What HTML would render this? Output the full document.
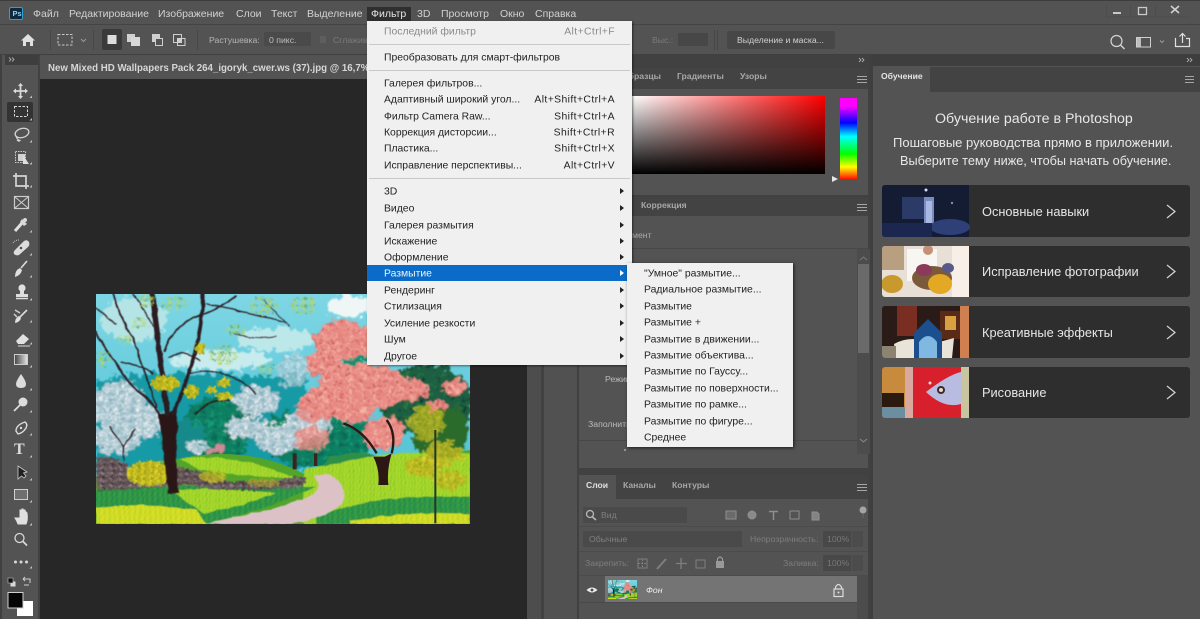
<!DOCTYPE html>
<html lang="ru"><head><meta charset="utf-8"><title>Photoshop</title>
<style>
html,body{margin:0;padding:0;background:#535353}
#r{position:relative;width:1200px;height:619px;overflow:hidden;background:#535353;font-family:"Liberation Sans","DejaVu Sans",sans-serif;color:#d8d8d8;font-size:10.5px;filter:blur(.35px)}
.b{position:absolute}
.t{position:absolute;white-space:nowrap;line-height:14px;height:14px}
.m{font-size:10.5px;color:#d2d2d2}
.k{color:#222;font-size:10.4px;transform:translateY(1.5px)}
.s{right:585px;color:#222;font-size:10.4px;letter-spacing:.4px;transform:translateY(1.5px)}
.o{font-size:8.6px;color:#bdbdbd;font-weight:bold}
.sep{position:absolute;left:369px;width:261px;height:1px;background:#c9c9c9}
.card{position:absolute;left:882px;width:308px;background:#2e2e2e;border-radius:3px;overflow:hidden}
.ct{position:absolute;left:982px;color:#e6e6e6;font-size:12.8px;white-space:nowrap;line-height:16px}
svg{position:absolute;overflow:visible}
</style></head><body>
<div id="r">
<!-- main regions -->
<div class="b" style="left:0;top:0;width:1200px;height:1px;background:#3c3c3c"></div>
<div class="b" style="left:0;top:24px;width:1200px;height:1px;background:#444"></div>
<div class="b" style="left:0;top:54px;width:1200px;height:1px;background:#404040"></div>
<div class="b" style="left:0;top:55px;width:1200px;height:11px;background:#3e3e3e"></div>
<div class="b" style="left:0;top:55px;width:2px;height:564px;background:#404040"></div>
<div class="b" style="left:2px;top:55px;width:36px;height:564px;background:#535353"></div>
<div class="b" style="left:5px;top:55px;width:33px;height:10px;background:#3e3e3e"></div>
<div class="b" style="left:38px;top:55px;width:2px;height:564px;background:#424242"></div>
<div class="b" style="left:40px;top:55px;width:487px;height:24px;background:#424242"></div>
<div class="b" style="left:40px;top:55px;width:330px;height:24px;background:#535353"></div>
<div class="b" style="left:40px;top:79px;width:487px;height:540px;background:#272727"></div>
<div class="b" style="left:527px;top:55px;width:14px;height:564px;background:#4d4d4d"></div>
<div class="b" style="left:541px;top:55px;width:3px;height:564px;background:#414141"></div>
<div class="b" style="left:544px;top:66px;width:33px;height:553px;background:#515151"></div>
<div class="b" style="left:577px;top:55px;width:295px;height:564px;background:#414141"></div>
<!-- color panel -->
<div class="b" style="left:579px;top:68px;width:289px;height:21px;background:#434343"></div>
<div class="b" style="left:579px;top:89px;width:289px;height:106px;background:#535353"></div>
<div class="b" style="left:632px;top:96px;width:193px;height:78px;background:linear-gradient(to top,#000,rgba(0,0,0,0)),linear-gradient(to right,#fff,#f00)"></div>
<div class="b" style="left:840px;top:98px;width:17px;height:82px;background:linear-gradient(to bottom,#f0f 0%,#f0f 10%,#00f 30%,#0ff 47%,#0f0 68%,#ff0 84%,#f00 100%)"></div>
<!-- adjustment panel -->
<div class="b" style="left:579px;top:197px;width:289px;height:19px;background:#434343"></div>
<div class="b" style="left:579px;top:216px;width:289px;height:252px;background:#535353"></div>
<div class="b" style="left:579px;top:248px;width:289px;height:1px;background:#484848"></div>
<div class="b" style="left:579px;top:440px;width:279px;height:1px;background:#484848"></div>
<div class="b" style="left:857px;top:249px;width:13px;height:205px;background:#4c4c4c"></div>
<div class="b" style="left:858px;top:264px;width:11px;height:89px;background:#6a6a6a"></div>
<!-- layers panel -->
<div class="b" style="left:579px;top:475px;width:289px;height:24px;background:#434343"></div>
<div class="b" style="left:579px;top:475px;width:37px;height:24px;background:#535353"></div>
<div class="b" style="left:579px;top:499px;width:289px;height:120px;background:#535353"></div>
<div class="b" style="left:583px;top:507px;width:104px;height:16px;background:#4a4a4a"></div>
<div class="b" style="left:583px;top:531px;width:159px;height:16px;background:#4a4a4a"></div>
<div class="b" style="left:823px;top:531px;width:28px;height:16px;background:#484848"></div>
<div class="b" style="left:852px;top:531px;width:11px;height:16px;background:#4c4c4c"></div>
<div class="b" style="left:823px;top:555px;width:28px;height:16px;background:#484848"></div>
<div class="b" style="left:852px;top:555px;width:11px;height:16px;background:#4c4c4c"></div>
<div class="b" style="left:579px;top:526px;width:289px;height:1px;background:#4b4b4b"></div>
<div class="b" style="left:579px;top:551px;width:289px;height:1px;background:#4b4b4b"></div>
<div class="b" style="left:579px;top:575px;width:289px;height:1px;background:#4b4b4b"></div>
<div class="b" style="left:605px;top:576px;width:252px;height:26px;background:#747474"></div>
<div class="b" style="left:857px;top:576px;width:11px;height:43px;background:#4c4c4c"></div>
<div class="b" style="left:579px;top:602px;width:278px;height:1px;background:#4a4a4a"></div>
<!-- learn panel -->
<div class="b" style="left:872px;top:55px;width:328px;height:564px;background:#535353"></div>
<div class="b" style="left:872px;top:55px;width:328px;height:11px;background:#3e3e3e"></div>
<div class="b" style="left:872px;top:67px;width:328px;height:25px;background:#434343"></div>
<div class="b" style="left:873px;top:67px;width:57px;height:25px;background:#535353"></div>
<div class="b" style="left:870px;top:55px;width:3px;height:564px;background:#3f3f3f"></div>
<!-- options controls -->
<div class="b" style="left:102px;top:29px;width:20px;height:21px;background:#3a3a3a;border-radius:2px"></div>
<div class="b" style="left:264px;top:32px;width:47px;height:14px;background:#4a4a4a"></div>
<div class="b" style="left:678px;top:33px;width:30px;height:13px;background:#474747"></div>
<div class="b" style="left:727px;top:31px;width:108px;height:18px;background:#474747;border-radius:2px"></div>
<div class="b" style="left:367px;top:7px;width:44px;height:14px;background:#2f2f2f"></div>
<div class="b" style="left:7px;top:102px;width:26px;height:20px;background:#333;border-radius:2px"></div>

<!-- painting -->
<svg style="left:96px;top:294px" width="374" height="230" viewBox="18 12 1122 690" preserveAspectRatio="none">
<defs>
<filter id="pa" x="-8%" y="-8%" width="116%" height="116%"><feTurbulence type="fractalNoise" baseFrequency="0.05" numOctaves="4" seed="7"/><feDisplacementMap in="SourceGraphic" scale="46" xChannelSelector="R" yChannelSelector="G"/><feGaussianBlur stdDeviation="2.400"/></filter>
<filter id="pb" x="-8%" y="-8%" width="116%" height="116%"><feTurbulence type="fractalNoise" baseFrequency="0.11" numOctaves="3" seed="3"/><feDisplacementMap in="SourceGraphic" scale="24" xChannelSelector="G" yChannelSelector="R"/><feGaussianBlur stdDeviation="1.600"/></filter>
<filter id="pc" x="-5%" y="-5%" width="110%" height="110%"><feTurbulence type="fractalNoise" baseFrequency="0.03" numOctaves="2" seed="11"/><feDisplacementMap in="SourceGraphic" scale="10" xChannelSelector="R" yChannelSelector="G"/><feGaussianBlur stdDeviation="1.500"/></filter>
<linearGradient id="sky" x1="0" y1="0" x2="0" y2="1"><stop offset="0" stop-color="#7ed6e4"/><stop offset="1" stop-color="#45bed2"/></linearGradient>
<pattern id="pk" width="64" height="52" patternUnits="userSpaceOnUse" patternTransform="scale(.6)"><rect width="64" height="52" fill="#e88a84"/><ellipse cx="12" cy="10" rx="11" ry="6" fill="#f4ac9f"/><ellipse cx="42" cy="14" rx="9" ry="5" fill="#d4645f"/><ellipse cx="28" cy="30" rx="12" ry="6" fill="#f6b9ab"/><ellipse cx="54" cy="36" rx="9" ry="7" fill="#f0a094"/><ellipse cx="8" cy="42" rx="7" ry="5" fill="#b8484e"/><ellipse cx="38" cy="47" rx="7" ry="3" fill="#cf5f60"/></pattern>
<pattern id="wh" width="54" height="44" patternUnits="userSpaceOnUse" patternTransform="scale(.6)"><rect width="54" height="44" fill="#a9c6d0"/><ellipse cx="10" cy="9" rx="10" ry="5" fill="#eef3f7"/><ellipse cx="36" cy="12" rx="9" ry="6" fill="#dae5ec"/><ellipse cx="22" cy="28" rx="11" ry="5" fill="#f2f5f8"/><ellipse cx="46" cy="32" rx="6" ry="5" fill="#6ea4af"/><ellipse cx="6" cy="36" rx="6" ry="4" fill="#7aa8b4"/></pattern>
<pattern id="ye" width="36" height="30" patternUnits="userSpaceOnUse" patternTransform="scale(.6)"><rect width="36" height="30" fill="#b9b31e"/><ellipse cx="9" cy="8" rx="7" ry="5" fill="#e8d52a"/><ellipse cx="26" cy="12" rx="6" ry="5" fill="#7f911c"/><ellipse cx="16" cy="24" rx="8" ry="4" fill="#eedd36"/></pattern>
<pattern id="lf" width="42" height="34" patternUnits="userSpaceOnUse" patternTransform="scale(.6)"><ellipse cx="10" cy="9" rx="9" ry="6" fill="#a9cc4a"/><ellipse cx="30" cy="11" rx="7" ry="5" fill="#63a86a"/><ellipse cx="20" cy="26" rx="9" ry="5" fill="#c1d652"/></pattern>
<pattern id="gs" width="44" height="26" patternUnits="userSpaceOnUse" patternTransform="scale(.7)"><rect width="44" height="26" fill="#9bd42a"/><path d="M4 26L10 4M18 26L24 8M34 26L38 2" stroke="#bbdc2e" stroke-width="4"/><path d="M12 26L16 10M28 26L31 12" stroke="#7cc02a" stroke-width="3"/></pattern>
<pattern id="gd" width="44" height="26" patternUnits="userSpaceOnUse" patternTransform="scale(.7)"><rect width="44" height="26" fill="#2d9646"/><path d="M4 26L10 4M24 26L28 6" stroke="#1f8650" stroke-width="4"/><path d="M14 26L18 8M36 26L40 6" stroke="#4fa636" stroke-width="3"/></pattern>
<pattern id="gy" width="44" height="26" patternUnits="userSpaceOnUse" patternTransform="scale(.7)"><rect width="44" height="26" fill="#cfdc24"/><path d="M4 26L10 4M24 26L28 6" stroke="#e4e230" stroke-width="4"/><path d="M14 26L18 8M36 26L40 6" stroke="#aed026" stroke-width="3"/></pattern>
<pattern id="st" width="40" height="26" patternUnits="userSpaceOnUse" patternTransform="scale(.7)"><rect width="40" height="26" fill="#5e4f52"/><ellipse cx="10" cy="7" rx="9" ry="5" fill="#8f7f87"/><ellipse cx="30" cy="12" rx="8" ry="5" fill="#7a6a66"/><ellipse cx="16" cy="21" rx="8" ry="4" fill="#3c3135"/></pattern>
<pattern id="dg" width="50" height="40" patternUnits="userSpaceOnUse" patternTransform="scale(.7)"><rect width="50" height="40" fill="#0f7f62"/><ellipse cx="12" cy="10" rx="11" ry="7" fill="#139a74"/><ellipse cx="36" cy="26" rx="11" ry="7" fill="#0a6654"/></pattern>
<pattern id="pd" width="56" height="44" patternUnits="userSpaceOnUse" patternTransform="scale(.7)"><rect width="56" height="44" fill="#1b5f42"/><ellipse cx="12" cy="11" rx="10" ry="6" fill="#2f7a3c"/><ellipse cx="38" cy="26" rx="11" ry="7" fill="#0f3f2e"/></pattern>
<symbol id="art" viewBox="18 12 1122 690" preserveAspectRatio="none">
<rect x="18" y="12" width="1122" height="690" fill="url(#sky)"/>
<g filter="url(#pa)">
<ellipse cx="780" cy="50" rx="75" ry="32" fill="#eef6f6"/>
<ellipse cx="130" cy="90" rx="100" ry="65" fill="#b4e4e6"/>
<ellipse cx="560" cy="150" rx="120" ry="35" fill="#bde8ea"/>
<ellipse cx="390" cy="210" rx="150" ry="30" fill="#c8ecee"/>
<path d="M18 275Q160 240 330 252T650 255V540H18Z" fill="#169aa6"/>
<ellipse cx="380" cy="420" rx="105" ry="100" fill="url(#dg)"/>
<ellipse cx="280" cy="450" rx="70" ry="60" fill="#138a8a"/>
<ellipse cx="680" cy="440" rx="170" ry="90" fill="url(#dg)"/>
<ellipse cx="90" cy="350" rx="85" ry="75" fill="url(#wh)"/>
<ellipse cx="80" cy="445" rx="75" ry="45" fill="url(#wh)"/>
<ellipse cx="170" cy="395" rx="45" ry="50" fill="url(#wh)"/>
<ellipse cx="500" cy="335" rx="70" ry="45" fill="url(#wh)"/>
<ellipse cx="470" cy="415" rx="65" ry="32" fill="url(#wh)"/>
<ellipse cx="565" cy="445" rx="70" ry="45" fill="url(#wh)"/>
<ellipse cx="610" cy="240" rx="50" ry="50" fill="url(#wh)" opacity=".7"/>
<ellipse cx="655" cy="400" rx="70" ry="50" fill="url(#wh)"/>
<ellipse cx="320" cy="470" rx="35" ry="18" fill="url(#wh)"/>
<ellipse cx="380" cy="480" rx="25" ry="14" fill="#cf8a96"/>
<ellipse cx="665" cy="445" rx="50" ry="38" fill="url(#pk)" opacity=".85"/>
<ellipse cx="660" cy="370" rx="40" ry="30" fill="url(#pk)" opacity=".8"/>
</g>
<path d="M18 560L300 500Q480 470 640 550L1140 480V702H18Z" fill="#52a52a"/>
<g filter="url(#pc)">
<path d="M270 505Q430 485 620 565Q450 560 330 540Z" fill="url(#gs)"/>
<path d="M640 540Q900 470 1140 490V702H640Z" fill="url(#gs)"/>
<path d="M18 600Q250 575 680 590Q520 660 350 702H18Z" fill="url(#gd)"/>
<path d="M18 655Q120 635 320 660L350 702H18Z" fill="url(#gy)"/>
<path d="M240 600Q400 590 560 610Q450 650 340 670Z" fill="url(#gs)"/>
<path d="M680 680Q840 610 1140 620V702H680Z" fill="url(#gd)"/>
<path d="M780 692Q950 662 1140 672V702H780Z" fill="url(#gy)"/>
<path d="M720 500Q800 480 860 495L700 530Z" fill="#2f8f4a"/>
</g>
<g filter="url(#pb)">
<path d="M18 500Q80 495 120 530Q300 520 420 575Q550 570 650 560L640 590Q450 610 280 585Q130 600 18 600Z" fill="url(#st)"/>
<ellipse cx="180" cy="550" rx="70" ry="38" fill="url(#ye)"/>
<ellipse cx="370" cy="560" rx="40" ry="18" fill="url(#ye)" opacity=".75"/>
<ellipse cx="520" cy="578" rx="50" ry="12" fill="url(#ye)" opacity=".55"/>
</g>
<path d="M340 702Q500 672 630 630Q715 600 672 558L722 554Q785 600 752 645Q690 692 600 702Z" fill="#dcc2c6" filter="url(#pc)"/>
<g fill="#3a2420"><rect x="608" y="490" width="12" height="48"/><rect x="672" y="490" width="10" height="38"/></g>
<!-- pink tree -->
<g filter="url(#pa)">
<ellipse cx="1010" cy="330" rx="140" ry="105" fill="url(#pd)"/>
<ellipse cx="790" cy="195" rx="42" ry="30" fill="#128f6e"/>
<ellipse cx="1050" cy="425" rx="85" ry="85" fill="#2b6b2c"/>
<ellipse cx="760" cy="150" rx="90" ry="58" fill="url(#pk)"/>
<ellipse cx="700" cy="220" rx="55" ry="42" fill="url(#pk)"/>
<ellipse cx="815" cy="290" rx="135" ry="72" fill="url(#pk)"/>
<ellipse cx="700" cy="340" rx="72" ry="48" fill="url(#pk)"/>
<ellipse cx="965" cy="300" rx="50" ry="32" fill="url(#pk)"/>
<ellipse cx="1095" cy="290" rx="36" ry="24" fill="url(#pk)"/>
<ellipse cx="880" cy="430" rx="62" ry="50" fill="url(#pk)"/>
<ellipse cx="1040" cy="345" rx="32" ry="16" fill="url(#pk)"/>
<ellipse cx="780" cy="370" rx="60" ry="30" fill="url(#pk)"/>
</g>
<path d="M850 500Q870 540 865 585H895Q890 540 905 490L885 500Z" fill="#2d1715"/>
<path d="M760 400Q820 420 860 490M905 490Q920 430 890 390" stroke="#2d1715" stroke-width="7" fill="none"/>
<!-- small yellow tree -->
<g filter="url(#pa)">
<ellipse cx="1010" cy="400" rx="55" ry="50" fill="url(#ye)" opacity=".75"/>
<ellipse cx="1060" cy="490" rx="62" ry="36" fill="url(#ye)" opacity=".85"/>
<ellipse cx="1000" cy="530" rx="58" ry="30" fill="url(#ye)" opacity=".9"/>
<ellipse cx="1080" cy="570" rx="45" ry="28" fill="url(#ye)" opacity=".85"/>
</g>
<path d="M1036 420V700" stroke="#27352a" stroke-width="6" fill="none"/>
<!-- main tree -->
<g filter="url(#pc)">
<path d="M205 372Q222 500 236 610H266Q254 490 262 420L262 352L233 372Z" fill="#2a1614"/>
<g stroke="#2a1c20" fill="none" stroke-linecap="round">
<path d="M188 12Q205 170 233 372" stroke-width="16"/>
<path d="M338 12Q340 100 308 212Q280 300 250 372" stroke-width="11"/>
<path d="M68 12Q95 90 128 142Q170 260 198 352" stroke-width="5"/>
<path d="M18 127Q70 220 130 290Q180 330 208 372" stroke-width="6"/>
<path d="M18 52Q60 90 78 102" stroke-width="4"/>
<path d="M223 182Q255 95 343 72Q400 50 438 17" stroke-width="5"/>
<path d="M238 202Q278 175 328 212" stroke-width="4"/>
<path d="M298 252Q368 225 468 282Q490 300 498 312" stroke-width="4"/>
<path d="M318 372Q358 322 418 332" stroke-width="5"/>
<path d="M348 42Q498 72 588 97" stroke-width="4"/>
<path d="M93 217Q158 222 188 252" stroke-width="4"/>
<path d="M130 12Q170 70 190 110" stroke-width="4"/>
<path d="M430 130Q500 150 560 140" stroke-width="2.500"/>
<path d="M100 510V470L60 410M100 470L135 420" stroke-width="4"/>
<path d="M520 30L600 110" stroke-width="2.500"/>
</g>
</g>
<g filter="url(#pb)">
<ellipse cx="172" cy="32" rx="24" ry="20" fill="url(#lf)"/>
<ellipse cx="255" cy="40" rx="40" ry="20" fill="url(#lf)"/>
<ellipse cx="520" cy="50" rx="45" ry="28" fill="url(#lf)"/>
<ellipse cx="640" cy="45" rx="40" ry="28" fill="url(#lf)"/>
<ellipse cx="400" cy="195" rx="42" ry="30" fill="url(#lf)"/>
<ellipse cx="35" cy="205" rx="24" ry="26" fill="url(#lf)"/>
<ellipse cx="105" cy="148" rx="22" ry="16" fill="url(#lf)"/>
<ellipse cx="150" cy="100" rx="22" ry="16" fill="url(#lf)"/>
<ellipse cx="440" cy="120" rx="30" ry="16" fill="url(#lf)"/>
<ellipse cx="330" cy="175" rx="16" ry="18" fill="url(#ye)"/>
<ellipse cx="225" cy="280" rx="44" ry="24" fill="url(#ye)"/>
<ellipse cx="305" cy="305" rx="22" ry="20" fill="url(#ye)"/>
<ellipse cx="405" cy="318" rx="28" ry="12" fill="url(#ye)"/>
<ellipse cx="400" cy="278" rx="22" ry="13" fill="url(#ye)"/>
<ellipse cx="365" cy="300" rx="14" ry="12" fill="url(#ye)"/>
<ellipse cx="530" cy="240" rx="32" ry="14" fill="url(#lf)"/>
</g>
</symbol>
</defs>
<use href="#art" x="18" y="12" width="1122" height="690"/>
</svg>

<!-- icons & shapes -->
<svg style="left:0;top:0" width="1200" height="619" viewBox="0 0 1200 619" fill="none">
<!-- PS logo -->
<rect x="9.500" y="7.500" width="13" height="12" rx="1.500" fill="#0d2a3e" stroke="#2f9fd0"/>
<!-- home -->
<path d="M21 40.500L28 34L35 40.500H33V46H30V42H26V46H23V40.500Z" fill="#e0e0e0"/>
<!-- marquee option -->
<rect x="58" y="34.500" width="14" height="10.500" stroke="#c8c8c8" stroke-dasharray="2.500 1.500"/>
<path d="M81 39L83.500 41.500L86 39" stroke="#9a9a9a"/>
<!-- selection mode buttons -->
<rect x="107.500" y="35" width="9" height="9" fill="#dcdcdc"/>
<rect x="127" y="34" width="8" height="8" fill="#d0d0d0"/><rect x="131" y="37" width="9" height="9" fill="#d8d8d8"/>
<rect x="152" y="34" width="8" height="8" fill="#cfcfcf"/><rect x="155.500" y="38.500" width="7" height="7" stroke="#d0d0d0" fill="#535353"/>
<rect x="173.500" y="34.500" width="8" height="8" stroke="#cfcfcf"/><rect x="177.500" y="38.500" width="7.500" height="7" stroke="#cfcfcf"/><rect x="177.500" y="38.500" width="4" height="4" fill="#cfcfcf"/>
<!-- separators -->
<path d="M50.500 30V50M93.500 30V50M197.500 30V50M714.500 30V50M717.500 30V50" stroke="#474747"/>
<!-- anti-alias checkbox -->
<rect x="320" y="36" width="6" height="7" fill="#5e5e5e"/>
<!-- window buttons -->
<path d="M1113 13H1121" stroke="#c9c9c9" stroke-width="2"/>
<rect x="1138.500" y="7.500" width="8" height="7" stroke="#c9c9c9" stroke-width="1.300"/>
<path d="M1171 6L1179 13M1179 6L1171 13" stroke="#d0d0d0" stroke-width="1.600"/>
<path d="M1106.500 5V17H1190M1130.500 5V17M1155.500 5V17" stroke="#4d4d4d"/>
<!-- top-right icons -->
<circle cx="1116.500" cy="41" r="5.500" stroke="#d5d5d5" stroke-width="1.200"/><path d="M1120.500 45L1124.500 49" stroke="#d5d5d5" stroke-width="1.400"/>
<rect x="1136.500" y="37.500" width="14" height="9.500" stroke="#cfcfcf"/><rect x="1137" y="38" width="4" height="8.500" fill="#bdbdbd"/>
<path d="M1160 40.500L1162 42.500L1164 40.500" stroke="#9a9a9a"/>
<path d="M1176 38.500H1175.500V46.500H1189.500V38.500H1186" stroke="#e0e0e0" stroke-width="1.200"/><path d="M1182.500 43V34M1179.500 36.500L1182.500 33.500L1185.500 36.500" stroke="#e0e0e0" stroke-width="1.200"/>
<!-- collapse chevrons -->
<g stroke="#bfbfbf" stroke-width=".8">
<path d="M9 57.500L11 59.500L9 61.500M12 57.500L14 59.500L12 61.500"/>
<path d="M859 58L861 60L859 62M862 58L864 60L862 62"/>
<path d="M1187 58L1189 60L1187 62M1190 58L1192 60L1190 62"/>
</g>
<!-- panel menu icons -->
<g stroke="#a6a6a6">
<path d="M857 76.500H867M857 79.500H867M857 82.500H867"/>
<path d="M857 204.500H867M857 207.500H867M857 210.500H867"/>
<path d="M857 484.500H867M857 487.500H867M857 490.500H867"/>
<path d="M1185 76.500H1194M1185 79.500H1194M1185 82.500H1194"/>
</g>
<path d="M832 176V182L838 179Z" fill="#e8e8e8"/>
<path d="M860 260L863.500 257L867 260" stroke="#7a7a7a"/><path d="M860 439L863.500 442L867 439" stroke="#8a8a8a"/>
<!-- tool corner triangles -->
<g fill="#c0c0c0">
<path d="M32 95.500V98H29.500Z"/><path d="M32 118V120.500H29.500Z"/><path d="M32 140V142.500H29.500Z"/><path d="M32 162V164.500H29.500Z"/><path d="M32 185V187.500H29.500Z"/><path d="M32 230V232.500H29.500Z"/><path d="M32 253V255.500H29.500Z"/><path d="M32 275V277.500H29.500Z"/><path d="M32 298V300.500H29.500Z"/><path d="M32 320V322.500H29.500Z"/><path d="M32 342V344.500H29.500Z"/><path d="M32 365V367.500H29.500Z"/><path d="M32 388V390.500H29.500Z"/><path d="M32 410V412.500H29.500Z"/><path d="M32 433V435.500H29.500Z"/><path d="M32 455V457.500H29.500Z"/><path d="M32 478V480.500H29.500Z"/><path d="M32 500V502.500H29.500Z"/><path d="M32 523V525.500H29.500Z"/><path d="M32 566V568.500H29.500Z"/>
</g>
<!-- move -->
<path d="M20.500 85V97M14.500 91H26.500" stroke="#d8d8d8" stroke-width="1.800"/>
<path d="M20.500 83L18 86H23ZM20.500 99L18 96H23ZM13 91L16 88.500V93.500ZM28 91L25 88.500V93.500Z" fill="#dcdcdc"/>
<!-- marquee -->
<rect x="14.500" y="106.500" width="13" height="10" stroke="#d8d8d8" stroke-dasharray="2.500 1.500"/>
<!-- lasso -->
<ellipse cx="22" cy="133" rx="7" ry="4.500" transform="rotate(-15 22 133)" stroke="#d2d2d2" stroke-width="1.300"/><path d="M16 136Q17 140 20 140.500Q19 142 17 140" stroke="#d2d2d2" stroke-width="1.200"/>
<!-- object select -->
<rect x="15.500" y="151.500" width="10" height="11" stroke="#ccc" stroke-dasharray="1.500 1"/><rect x="18" y="154" width="7" height="7" fill="#d0d0d0"/><path d="M23 155L29 164H23Z" fill="#dedede"/>
<!-- crop -->
<path d="M16 173V186H29M13 176H26V189" stroke="#d4d4d4" stroke-width="1.700"/>
<!-- frame -->
<rect x="14.500" y="196.500" width="14" height="12" stroke="#ccc" stroke-width="1.200"/><path d="M15 197L28 208M28 197L15 208" stroke="#ccc"/>
<!-- eyedropper -->
<path d="M15 231L22 223" stroke="#e0e0e0" stroke-width="3"/><path d="M22 219L27 224L24 226L20 222Z" fill="#d8d8d8"/><circle cx="25" cy="220" r="2" fill="#d8d8d8"/>
<!-- healing -->
<path d="M15 250L24 241Q27 239 29 242Q30 245 28 247L19 255Q16 256 14 254Q13 252 15 250Z" fill="#dcdcdc"/><circle cx="21" cy="248" r="1.300" fill="#535353"/><path d="M13 243Q15 240 19 240" stroke="#c0c0c0" stroke-dasharray="1 1"/>
<!-- brush -->
<path d="M21 268L27 261" stroke="#dcdcdc" stroke-width="1.600"/><path d="M15 277Q15 270 20 268L22 270Q21 275 15 277Z" fill="#e0e0e0"/>
<!-- stamp -->
<circle cx="22" cy="288" r="3.600" fill="#e0e0e0"/><path d="M20 291H24V294H28V297H16V294H20Z" fill="#dedede"/><path d="M16 298.500H28" stroke="#dedede" stroke-width="1.500"/>
<!-- history brush -->
<path d="M20 317L27 310" stroke="#dcdcdc" stroke-width="1.600"/><path d="M15 323Q15 318 19 316L21 318Q20 322 15 323Z" fill="#e0e0e0"/><path d="M14 314L17 317M15 310L20 313" stroke="#cfcfcf" stroke-width="1.500"/>
<!-- eraser -->
<path d="M16 341L23 334L29 339L24 344H18Z" fill="#e0e0e0"/><path d="M18 346H30" stroke="#dadada"/>
<!-- gradient -->
<defs><linearGradient id="g1"><stop offset="0" stop-color="#444"/><stop offset="1" stop-color="#e6e6e6"/></linearGradient></defs>
<rect x="14.500" y="354.500" width="13" height="10" fill="url(#g1)" stroke="#ccc"/>
<!-- burn drop -->
<path d="M21 374Q16 381 16 384Q16 388 21 388Q26 388 26 384Q26 381 21 374Z" fill="#dcdcdc"/>
<!-- dodge -->
<circle cx="23" cy="402" r="4.500" fill="#dcdcdc"/><path d="M14 411L20 405" stroke="#dcdcdc" stroke-width="1.700"/>
<!-- pen -->
<path d="M16 431Q16 425 25 422Q28 424 26 428Q23 433 18 434Z" stroke="#dadada" stroke-width="1.400"/><circle cx="21" cy="428" r="1.200" fill="#dadada"/>
<!-- path select -->
<path d="M18 466V479L21.500 476L24 478L26 476L23.500 473L27 472Z" fill="#202020" stroke="#cfcfcf" stroke-width=".8"/>
<!-- rect -->
<rect x="14.500" y="489.500" width="13" height="10" fill="#6f6f6f" stroke="#cfcfcf"/>
<!-- hand -->
<path d="M15 518Q17 521 18 524H26Q28 520 27 513L26 512V516H25V510L24 510V516H23V509H22V516H21V510H20V518Z" fill="#e0e0e0" stroke="#e0e0e0"/>
<!-- zoom -->
<circle cx="19.500" cy="538" r="4.500" stroke="#d8d8d8" stroke-width="1.300"/><path d="M23 541.500L27 545.500" stroke="#d8d8d8" stroke-width="1.800"/>
<!-- dots -->
<circle cx="15.500" cy="562" r="1.500" fill="#d8d8d8"/><circle cx="21" cy="562" r="1.500" fill="#d8d8d8"/><circle cx="26.500" cy="562" r="1.500" fill="#d8d8d8"/>
<!-- default/swap -->
<rect x="10.500" y="581.500" width="5" height="5" fill="#d8d8d8"/><rect x="8" y="578" width="5" height="5" fill="#111" stroke="#bbb" stroke-width=".6"/>
<path d="M23 579H30V583M23 579L25 577M23 579L25 581M24 585H29" stroke="#cfcfcf"/>
<!-- fg / bg color -->
<rect x="17" y="601" width="16" height="15" fill="#fff"/>
<rect x="8" y="592.500" width="15" height="15.500" fill="#050505" stroke="#cfcfcf"/>
<!-- layers icons -->
<circle cx="590" cy="514" r="3.500" stroke="#b8b8b8" stroke-width="1.300"/><path d="M592.500 517L596 520" stroke="#b8b8b8" stroke-width="1.500"/>
<g stroke="#8f8f8f">
<rect x="726" y="511" width="10" height="8" fill="#6a6a6a"/>
<circle cx="752" cy="515" r="4" fill="#8a8a8a"/>
<path d="M769 511.500H778M773.500 511.500V520" stroke-width="1.500"/>
<rect x="790" y="511" width="9" height="8"/>
<path d="M812 512H817L819 514V520H812Z" fill="#838383"/>
</g>
<circle cx="863" cy="510" r="3.500" fill="#a5a5a5"/>
<path d="M863 514V518" stroke="#5e5e5e" stroke-width="2"/>
<g stroke="#7f7f7f">
<rect x="638" y="559" width="9" height="9"/><path d="M642.500 559V568M638 563.500H647" stroke-dasharray="2 1"/>
<path d="M657 569L666 559" stroke-width="2"/>
<path d="M681 558V569M676 563.500H687" stroke-width="1.300"/>
<rect x="696" y="560" width="9" height="8"/>
</g>
<rect x="716" y="561" width="8" height="7" fill="#999"/><path d="M717.500 561V559Q720 555 722.500 559V561" stroke="#999" stroke-width="1.200"/>
<!-- eye -->
<path d="M586.500 590Q592 585 597.500 590Q592 595 586.500 590Z" fill="#e8e8e8"/><circle cx="592" cy="590" r="1.400" fill="#4a4a4a"/>
<!-- lock -->
<rect x="834" y="589" width="9" height="7.500" stroke="#dcdcdc" stroke-width="1.200"/><path d="M835.500 589V587Q838.500 582 841.500 587V589" stroke="#dcdcdc" stroke-width="1.200"/><circle cx="838.500" cy="592.500" r="1" fill="#dcdcdc"/>
<circle cx="625" cy="450" r="1" fill="#aaa"/>
</svg>
<svg style="left:608px;top:580px" width="29" height="19" viewBox="18 12 1122 690" preserveAspectRatio="none"><use href="#art" x="18" y="12" width="1122" height="690"/></svg>

<!-- menu bar text -->
<span class="t" style="left:12.500px;top:6.500px;font-size:7.500px;font-weight:bold;color:#8fd0f0">Ps</span>
<span class="t m" style="left:33px;top:7px">Файл</span>
<span class="t m" style="left:69px;top:7px">Редактирование</span>
<span class="t m" style="left:158px;top:7px">Изображение</span>
<span class="t m" style="left:236px;top:7px">Слои</span>
<span class="t m" style="left:271px;top:7px">Текст</span>
<span class="t m" style="left:307px;top:7px">Выделение</span>
<span class="t m" style="left:371px;top:7px;color:#e6e6e6">Фильтр</span>
<span class="t m" style="left:417px;top:7px">3D</span>
<span class="t m" style="left:441px;top:7px">Просмотр</span>
<span class="t m" style="left:500px;top:7px">Окно</span>
<span class="t m" style="left:535px;top:7px">Справка</span>

<!-- options text -->
<span class="t" style="left:209px;top:33px;font-size:8.700px;color:#b5b5b5">Растушевка:</span>
<span class="t" style="left:269px;top:33px;font-size:8.700px;color:#bdbdbd">0 пикс.</span>
<span class="t" style="left:333px;top:33px;font-size:8.700px;color:#7a7a7a">Сглаживание</span>
<span class="t" style="left:652px;top:33px;font-size:8.700px;color:#7a7a7a">Выс.:</span>
<span class="t" style="left:737px;top:33px;font-size:8.700px;color:#d0d0d0">Выделение и маска...</span>
<span class="t" style="left:48px;top:61.500px;font-size:9.700px;font-weight:bold;color:#d6d6d6">New Mixed HD Wallpapers Pack 264_igoryk_cwer.ws (37).jpg @ 16,7%</span>

<!-- panels text -->
<span class="t o" style="left:622px;top:69px;color:#a8a8a8">Образцы</span>
<span class="t o" style="left:677px;top:69px;color:#a8a8a8">Градиенты</span>
<span class="t o" style="left:740px;top:69px;color:#a8a8a8">Узоры</span>
<span class="t o" style="left:641px;top:198px;color:#a8a8a8">Коррекция</span>
<span class="t" style="left:632px;top:228px;font-size:8.700px;color:#aaa">мент</span>
<span class="t" style="left:605px;top:372px;font-size:8.700px;color:#bbb">Режим</span>
<span class="t" style="left:588px;top:417px;font-size:8.700px;color:#bbb">Заполнить</span>
<span class="t o" style="left:586px;top:478px;color:#e0e0e0">Слои</span>
<span class="t o" style="left:623px;top:478px;color:#a8a8a8">Каналы</span>
<span class="t o" style="left:672px;top:478px;color:#a8a8a8">Контуры</span>
<span class="t" style="left:601px;top:508px;font-size:8.700px;color:#7f7f7f">Вид</span>
<span class="t" style="left:589px;top:532px;font-size:8.700px;color:#808080">Обычные</span>
<span class="t" style="left:750px;top:532px;font-size:8.700px;color:#7d7d7d">Непрозрачность:</span>
<span class="t" style="left:827px;top:532px;font-size:8.700px;color:#777">100%</span>
<span class="t" style="left:585px;top:556px;font-size:8.700px;color:#7d7d7d">Закрепить:</span>
<span class="t" style="left:783px;top:556px;font-size:8.700px;color:#7d7d7d">Заливка:</span>
<span class="t" style="left:827px;top:556px;font-size:8.700px;color:#777">100%</span>
<span class="t" style="left:646px;top:583px;font-size:8.700px;font-style:italic;color:#ececec">Фон</span>

<!-- learn panel text -->
<span class="t o" style="left:881px;top:69px;color:#e4e4e4">Обучение</span>
<span class="t" style="left:935px;top:111px;height:17px;line-height:17px;font-size:14.200px;color:#e8e8e8">Обучение работе в Photoshop</span>
<span class="t" style="left:893px;top:135px;height:16px;line-height:16px;font-size:13px;color:#e8e8e8">Пошаговые руководства прямо в приложении.</span>
<span class="t" style="left:900px;top:153px;height:16px;line-height:16px;font-size:12.700px;color:#e8e8e8">Выберите тему ниже, чтобы начать обучение.</span>

<!-- learn cards -->
<div class="card" style="top:185px;height:52px"><svg style="left:0;top:0" width="87" height="52"><rect width="87" height="52" fill="#141c34"/><rect x="20" y="12" width="24" height="22" fill="#2c3a68"/><rect x="42" y="12" width="10" height="30" fill="#7a8cc0"/><rect x="44" y="16" width="6" height="22" fill="#a8b8e0"/><ellipse cx="68" cy="42" rx="20" ry="8" fill="#2f3f78"/><rect y="38" width="50" height="14" fill="#1c2750"/><circle cx="44" cy="5" r="1.500" fill="#dde"/><circle cx="70" cy="18" r="1.200" fill="#889"/></svg></div>
<div class="card" style="top:246px;height:51px"><svg style="left:0;top:0" width="87" height="51"><rect width="87" height="51" fill="#e8e0d6"/><rect x="0" y="0" width="22" height="24" fill="#b89f80"/><rect x="25" y="3" width="30" height="32" fill="#f8f6f2"/><circle cx="46" cy="4" r="5" fill="#c49078"/><rect x="70" y="0" width="17" height="51" fill="#f8f0e8"/><ellipse cx="10" cy="38" rx="11" ry="9" fill="#c89a2e"/><ellipse cx="50" cy="32" rx="20" ry="12" fill="#7a5a3a"/><ellipse cx="58" cy="38" rx="12" ry="10" fill="#e3a824"/><ellipse cx="42" cy="24" rx="8" ry="6" fill="#8a3a5a"/><ellipse cx="66" cy="22" rx="6" ry="5" fill="#5a5a8a"/></svg></div>
<div class="card" style="top:306px;height:52px"><svg style="left:0;top:0" width="87" height="52"><rect width="87" height="52" fill="#2a1a18"/><rect x="15" y="0" width="20" height="30" fill="#7a2e22"/><rect x="58" y="5" width="20" height="28" fill="#5a2a18"/><rect x="63" y="10" width="11" height="14" fill="#d8a040"/><rect x="78" y="0" width="9" height="52" fill="#d08050"/><path d="M12 38Q30 28 50 38L72 32L70 52H14Z" fill="#e8e4d8"/><path d="M32 52V27L46 13L60 27V52Z" fill="#1c4f8e"/><path d="M37 36Q46 24 55 36V52H37Z" fill="#7fb8e0"/><rect x="0" y="40" width="14" height="12" fill="#8c8470"/></svg></div>
<div class="card" style="top:367px;height:51px"><svg style="left:0;top:0" width="87" height="51"><rect width="87" height="51" fill="#d81f2c"/><rect width="24" height="50" fill="#c88a3c"/><rect y="26" width="22" height="16" fill="#2a1a10"/><rect y="40" width="30" height="11" fill="#6b8ea0"/><rect x="23" width="8" height="51" fill="#d9a8a0"/><rect x="79" width="8" height="51" fill="#c8c4a0"/><path d="M44 25Q66 8 79 5V37Q62 42 44 25Z" fill="#b8bce0"/><circle cx="59" cy="23" r="4" fill="#3a2a2a"/><circle cx="59" cy="23" r="2" fill="#e8d8c8"/><circle cx="48" cy="16" r="1.500" fill="#ddd"/></svg></div>
<span class="ct" style="top:204px">Основные навыки</span>
<span class="ct" style="top:264px">Исправление фотографии</span>
<span class="ct" style="top:325px">Креативные эффекты</span>
<span class="ct" style="top:385px">Рисование</span>
<svg style="left:0;top:0" width="1200" height="619" fill="none"><g stroke="#d5d5d5" stroke-width="1.200"><path d="M1167 205L1175 211.500L1167 218"/><path d="M1167 265L1175 271.500L1167 278"/><path d="M1167 326L1175 332.500L1167 339"/><path d="M1167 386L1175 392.500L1167 399"/></g></svg>

<!-- filter menu -->
<div class="b" style="left:367px;top:21px;width:265px;height:344px;background:#f0f0f0;box-shadow:1px 1px 2px rgba(0,0,0,.5)"></div>
<div class="sep" style="top:44px"></div><div class="sep" style="top:70px"></div><div class="sep" style="top:178px"></div>
<div class="b" style="left:367px;top:265px;width:265px;height:16px;background:#0a6cc8"></div>
<span class="t k" style="left:384px;top:24px;color:#8a8a8a">Последний фильтр</span>
<span class="t s" style="top:24px;color:#8a8a8a">Alt+Ctrl+F</span>
<span class="t k" style="left:384px;top:50px">Преобразовать для смарт-фильтров</span>
<span class="t k" style="left:384px;top:76px">Галерея фильтров...</span>
<span class="t k" style="left:384px;top:92px">Адаптивный широкий угол...</span><span class="t s" style="top:92px">Alt+Shift+Ctrl+A</span>
<span class="t k" style="left:384px;top:109px">Фильтр Camera Raw...</span><span class="t s" style="top:109px">Shift+Ctrl+A</span>
<span class="t k" style="left:384px;top:125px">Коррекция дисторсии...</span><span class="t s" style="top:125px">Shift+Ctrl+R</span>
<span class="t k" style="left:384px;top:141px">Пластика...</span><span class="t s" style="top:141px">Shift+Ctrl+X</span>
<span class="t k" style="left:384px;top:158px">Исправление перспективы...</span><span class="t s" style="top:158px">Alt+Ctrl+V</span>
<span class="t k" style="left:384px;top:184px">3D</span>
<span class="t k" style="left:384px;top:201px">Видео</span>
<span class="t k" style="left:384px;top:218px">Галерея размытия</span>
<span class="t k" style="left:384px;top:234px">Искажение</span>
<span class="t k" style="left:384px;top:250px">Оформление</span>
<span class="t k" style="left:384px;top:266px;color:#f4f4f4">Размытие</span>
<span class="t k" style="left:384px;top:283px">Рендеринг</span>
<span class="t k" style="left:384px;top:299px">Стилизация</span>
<span class="t k" style="left:384px;top:316px">Усиление резкости</span>
<span class="t k" style="left:384px;top:332px">Шум</span>
<span class="t k" style="left:384px;top:349px">Другое</span>
<svg style="left:0;top:0" width="1200" height="619"><g fill="#222"><path d="M620 188V194L624 191Z"/><path d="M620 205V211L624 208Z"/><path d="M620 222V228L624 225Z"/><path d="M620 238V244L624 241Z"/><path d="M620 254V260L624 257Z"/><path d="M620 270V276L624 273Z" fill="#fff"/><path d="M620 287V293L624 290Z"/><path d="M620 303V309L624 306Z"/><path d="M620 320V326L624 323Z"/><path d="M620 336V342L624 339Z"/><path d="M620 353V359L624 356Z"/></g></svg>

<!-- submenu -->
<div class="b" style="left:627px;top:263px;width:166px;height:184px;background:#f0f0f0;box-shadow:1px 1px 3px rgba(0,0,0,.65)"></div>
<span class="t k" style="left:644px;top:266px">"Умное" размытие...</span>
<span class="t k" style="left:644px;top:282px">Радиальное размытие...</span>
<span class="t k" style="left:644px;top:299px">Размытие</span>
<span class="t k" style="left:644px;top:315px">Размытие +</span>
<span class="t k" style="left:644px;top:332px">Размытие в движении...</span>
<span class="t k" style="left:644px;top:348px">Размытие объектива...</span>
<span class="t k" style="left:644px;top:364px">Размытие по Гауссу...</span>
<span class="t k" style="left:644px;top:381px">Размытие по поверхности...</span>
<span class="t k" style="left:644px;top:397px">Размытие по рамке...</span>
<span class="t k" style="left:644px;top:414px">Размытие по фигуре...</span>
<span class="t k" style="left:644px;top:430px">Среднее</span>

<!-- T tool as real text -->
<span class="t" style="left:14px;top:442px;height:16px;line-height:16px;font-family:'Liberation Serif',serif;font-size:16px;font-weight:bold;color:#dcdcdc">T</span>
</div>
</body></html>
